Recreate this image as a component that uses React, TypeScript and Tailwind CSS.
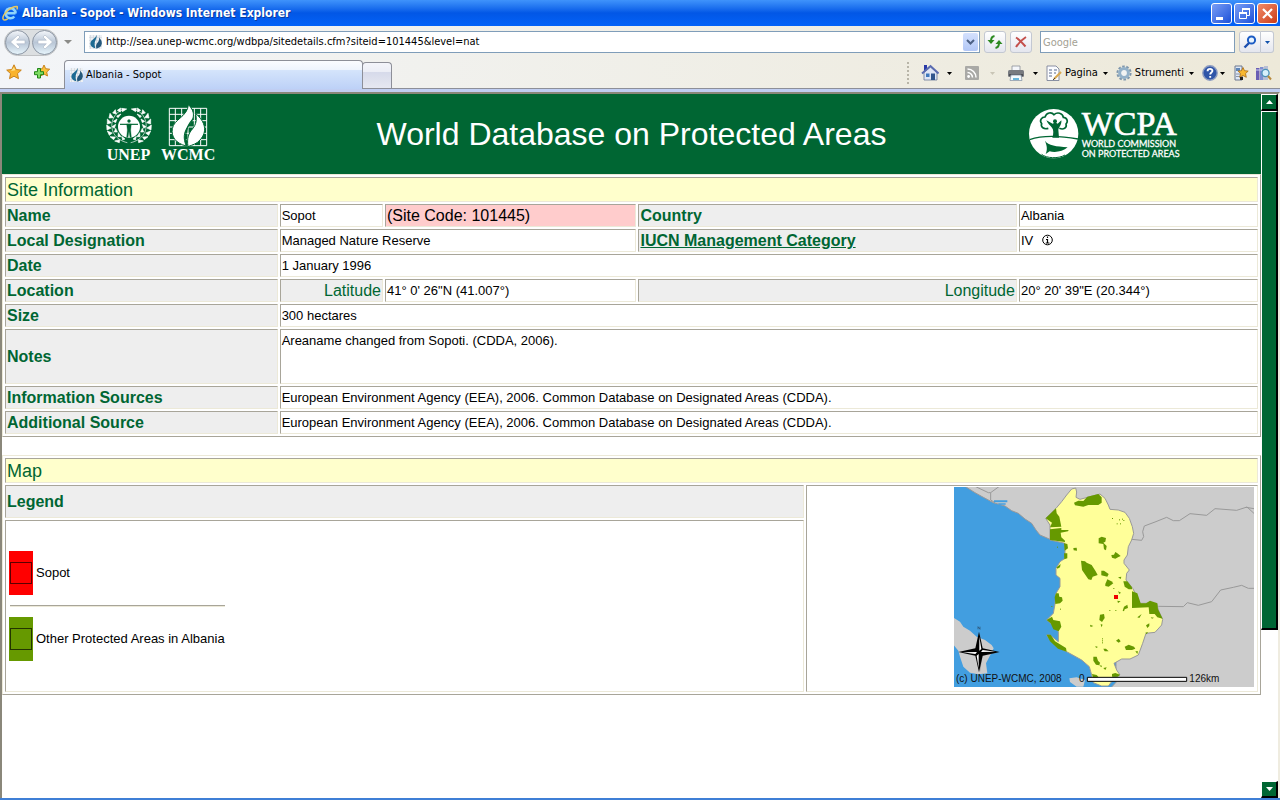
import type { ReactNode } from "react";
import { clsx } from "clsx";

const ui = "font-['DejaVu_Sans_Condensed','Noto_Sans',sans-serif]";

const mapAreas = [
  "372,68 385,62 400,63 412,50 445,42 455,52 455,68 445,75 415,75 400,80 375,76",
  "287,115 318,85 320,100 328,110 334,140 300,142 306,128",
  "300,148 334,144 334,150 356,150 354,154 332,158 334,172 345,182 345,186 300,180",
  "446,175 455,170 468,174 466,185 460,188 470,198 468,211 462,208 460,192 446,190",
  "393,242 405,244 410,248 425,255 436,272 443,285 428,290 424,300 415,298 396,270",
  "454,272 462,272 476,282 472,290 454,286",
  "466,312 472,298 484,304 490,310 476,320 466,318",
  "484,225 492,224 496,216 502,220 512,228 504,232 496,236 486,233",
  "370,204 380,203 381,212 371,211",
  "342,190 352,192 354,205 344,212",
  "342,220 352,220 352,235 343,238",
  "320,262 332,252 330,262 322,266",
  "318,340 326,340 328,350 336,352 338,362 330,370 316,372 314,352",
  "290,420 306,410 310,420 330,424 334,440 326,454 310,448 302,430",
  "290,464 302,464 315,484 348,504 350,515 324,506 300,484",
  "450,404 462,402 464,414 456,426 448,420",
  "420,434 430,438 422,441",
  "452,432 458,434 454,442",
  "430,530 440,530 444,542 450,548 448,556 438,554 430,542",
  "436,498 444,501 438,504",
  "460,506 468,506 476,514 464,514",
  "460,564 470,562 466,570",
  "448,556 456,557 454,562",
  "426,582 440,585 446,592 430,596",
  "520,304 532,304 546,322 546,328 536,328 524,320",
  "546,334 562,340 572,370 588,370 600,362 622,370 624,388 638,416 622,412 614,402 598,402 596,382 546,384",
  "518,392 522,380 532,374 534,384 524,388 522,394",
  "562,412 575,402 568,414",
  "602,412 612,413 606,416",
  "588,436 598,430 598,438 592,444",
  "586,458 594,456 590,463",
  "498,482 506,476 512,484 506,488",
  "524,500 536,494 552,500 556,506 546,510 528,510",
  "556,514 564,514 562,522",
  "486,582 496,579 510,584 504,590 486,590",
  "504,292 514,290 512,297",
  "502,362 512,364 504,369",
  "504,334 513,338 508,342",
];

const specks = [
  "486,114", "507,118", "510,130", "520,120", "500,130", "516,116", "490,324", "478,390", "496,390",
  "456,475", "456,481", "456,487", "321,200", "304,378", "330,386", "322,342",
];

function FlameMark() {
  return (
    <svg viewBox="0 0 16 16" className="size-4 shrink-0" aria-hidden="true">
      <rect x="1" y="1" width="13" height="14" fill="#eef1f4" />
      <path d="M2.500 1v14M5.500 1v14M8.500 1v14M11.500 1v14M1 3.500h13M1 6.500h13M1 9.500h13M1 12.500h13" stroke="#cdd3da" strokeWidth=".6" />
      <path d="M8.500 1C9 4.500 7 6 6.700 9c-.2 2 .2 4 .8 5.500C4 13.500 2 11.500 2.500 9c.5-3.500 5-4 6-8z" fill="#1d6a92" />
      <path d="M11 3.500c2.700 2.500 3.500 5.200 2.400 7.700-.9 1.900-2.600 2.500-4.900 3.600C7.700 12 8 10.500 9.300 9 10.800 7.300 11.500 6 11 3.500z" fill="#24587c" />
    </svg>
  );
}

function Caret({ muted }: { muted?: boolean }) {
  return (
    <svg viewBox="0 0 5 3" className={clsx("h-[3px] w-[5px] shrink-0", muted ? "fill-[#c9c5b6]" : "fill-black")} aria-hidden="true">
      <path d="M0 0h5L2.500 3z" />
    </svg>
  );
}

function TitleBar() {
  const base = "flex size-[21px] items-center justify-center rounded-[3px] border border-white";
  return (
    <header className="flex h-[26px] shrink-0 items-center bg-gradient-to-b from-[#3f93fb] via-[#0257e6] to-[#0362f8] pr-[2px] pl-[2px]">
      <svg viewBox="0 0 16 16" className="size-4" aria-hidden="true">
        <path d="M13.500 8.500a5 5 0 1 0-1.200 3M4 8.300h9.500" fill="none" stroke="#8fd4fb" strokeWidth="2.600" />
        <path d="M1.200 14.500C-.5 10.500 8 1.500 14.800 1.500c1 .3.700 1.700 0 3M1.200 14.500c1 .8 3 .3 4.500-.7" fill="none" stroke="#e8c860" strokeWidth="1.500" />
      </svg>
      <h1 className={clsx(ui, "ml-1 text-[12px] font-bold text-white [text-shadow:1px_1px_0_#0a3a9e]")}>
        Albania - Sopot - Windows Internet Explorer
      </h1>
      <div className="ml-auto flex gap-[2px]">
        <button aria-label="Minimize" className={clsx(base, "bg-gradient-to-br from-[#7a9df5] to-[#1c4fd8]")}>
          <svg viewBox="0 0 19 19" className="size-[19px]"><path d="M4 13h7v3H4z" fill="#fff" /></svg>
        </button>
        <button aria-label="Restore" className={clsx(base, "bg-gradient-to-br from-[#7a9df5] to-[#1c4fd8]")}>
          <svg viewBox="0 0 19 19" className="size-[19px]" fill="none" stroke="#fff">
            <path d="M7.500 8V4.500h7v7H12M4.500 8.500h7v6h-7z" /><path d="M7 5h8M4 9h8" strokeWidth="2" />
          </svg>
        </button>
        <button aria-label="Close" className={clsx(base, "bg-gradient-to-br from-[#f08a68] to-[#cc3a12]")}>
          <svg viewBox="0 0 19 19" className="size-[19px]"><path d="M5 5l9 9M14 5l-9 9" stroke="#fff" strokeWidth="2.200" /></svg>
        </button>
      </div>
    </header>
  );
}

function ArrowButton({ label, flip }: { label: string; flip?: boolean }) {
  return (
    <button aria-label={label} className="flex size-[25px] items-center justify-center rounded-full border border-[#8b95a3] bg-gradient-to-b from-[#f2f5f9] via-[#b9c6d6] to-[#e6f4fb]">
      <svg viewBox="0 0 18 18" className={clsx("size-[18px]", flip && "rotate-180")}>
        <path d="M1.500 9L9 2l2 2-3.300 3.200H16v3.600H7.700L11 14l-2 2z" fill="#fff" stroke="#a9b6c5" strokeWidth=".6" />
      </svg>
    </button>
  );
}

function AddressBar() {
  const btn = "flex h-[22px] items-center justify-center border border-[#c3c8d2] bg-gradient-to-b from-white to-[#e4e6ee]";
  return (
    <div className="flex h-8 items-center pr-[6px] pl-1">
      <div className="flex items-center gap-[2px] rounded-full border border-[#c0c2c4] bg-[#dcdfe1]">
        <ArrowButton label="Back" />
        <ArrowButton label="Forward" flip />
      </div>
      <svg viewBox="0 0 8 4" className="ml-[6px] h-1 w-2 fill-[#8b8b88]" aria-hidden="true"><path d="M0 0h8L4 4z" /></svg>
      <div className="ml-3 flex h-[22px] flex-1 items-center border border-[#7f9db9] bg-white pr-px pl-[3px]">
        <FlameMark />
        <input
          aria-label="Address"
          className={clsx(ui, "ml-[2px] min-w-0 flex-1 text-[11px] text-black outline-none")}
          defaultValue="http://sea.unep-wcmc.org/wdbpa/sitedetails.cfm?siteid=101445&level=nat"
        />
        <button aria-label="Show addresses" className="flex h-[18px] w-[15px] items-center justify-center rounded-[2px] bg-gradient-to-b from-[#d4e1fd] to-[#b2c7f6]">
          <svg viewBox="0 0 9 6" className="h-[6px] w-[9px]"><path d="M1 1l3.500 3.500L8 1" fill="none" stroke="#4d6185" strokeWidth="2" /></svg>
        </button>
      </div>
      <button aria-label="Refresh" className={clsx(btn, "ml-1 w-[22px] rounded-[3px]")}>
        <svg viewBox="0 0 16 16" className="size-4" fill="none" stroke="#2d8a22" strokeWidth="2">
          <path d="M7.500 2C4.500 2.500 4 4 4 7M8.500 14c3-.5 3.500-2 3.500-5" />
          <path d="M.5 6h7L4 10zM8.500 10h7L12 6z" fill="#2d8a22" stroke="none" />
        </svg>
      </button>
      <button aria-label="Stop" className={clsx(btn, "ml-1 w-[22px] rounded-[3px]")}>
        <svg viewBox="0 0 16 16" className="size-4"><path d="M3 3.500c4 2.500 7 6 9.500 9M13 3C9 5.500 5.500 9 3 13" fill="none" stroke="#c4504c" strokeWidth="2" /></svg>
      </button>
      <input
        aria-label="Search"
        placeholder="Google"
        className={clsx(ui, "ml-2 h-[22px] w-[195px] border border-[#7f9db9] bg-white px-[2px] text-[11px] outline-none placeholder:text-[#a3a194]")}
      />
      <button aria-label="Go" className={clsx(btn, "ml-1 w-[22px] rounded-l-[3px]")}>
        <svg viewBox="0 0 16 16" className="size-4"><circle cx="9.500" cy="6" r="3.600" fill="#e8f3fd" stroke="#1c5cc4" strokeWidth="2" /><path d="M7 9l-4.500 4.500" stroke="#1c4fae" strokeWidth="2.400" /></svg>
      </button>
      <button aria-label="Search options" className={clsx(btn, "w-[13px] rounded-r-[3px] border-l-0")}>
        <svg viewBox="0 0 5 3" className="h-[3px] w-[5px] fill-[#1253ab]"><path d="M0 0h5L2.500 3z" /></svg>
      </button>
    </div>
  );
}

function Tool({ label, gap, children }: { label: string; gap?: string; children: ReactNode }) {
  return (
    <button aria-label={label} className={clsx(ui, "flex items-center text-[11px] text-black", gap)}>
      {children}
    </button>
  );
}

const star = "M8 .8l2.200 4.700 5.100.6-3.800 3.500 1 5.100L8 12.200l-4.500 2.500 1-5.100L.7 6.100l5.100-.6z";

function TabRow() {
  return (
    <div className="flex h-[31px] items-end border-b border-[#8d8f98] pr-2 pl-[6px]">
      <button aria-label="Favorites" className="mb-2">
        <svg viewBox="0 0 16 16" className="size-4"><path d={star} fill="#f9b32c" stroke="#c47a12" strokeWidth=".9" /><path d="M8 3l1.300 3.200L5 7z" fill="#fde28c" /></svg>
      </button>
      <button aria-label="Add to favorites" className="mb-2 ml-3">
        <svg viewBox="0 0 16 16" className="size-4">
          <path d="M10 1l1.700 3.700 4 .5-3 2.800.8 4L10 10l-3.500 2 .8-4-3-2.800 4-.5z" fill="#f9c23c" stroke="#c47a12" strokeWidth=".9" />
          <path d="M3.500 4.500h3v3.200h3v3h-3V14h-3v-3.300H.5v-3h3z" fill="#7fdc63" stroke="#1f8418" strokeWidth="1" />
        </svg>
      </button>
      <div role="tab" aria-selected="true" className={clsx(ui, "-mb-px ml-[14px] flex h-[29px] w-[299px] items-center rounded-t-[4px] border border-b-0 border-[#8d8f98] bg-[linear-gradient(#fbfcff_0,#eef4fd_32%,#d4e4fb_34%,#bdd1f7_100%)] pl-1 text-[11px] text-black")}>
        <FlameMark />
        <span className="ml-px">Albania - Sopot</span>
      </div>
      <button aria-label="New tab" className="-ml-px h-[26px] w-[30px] rounded-t-[4px] border border-b-0 border-[#8d8f98] bg-[linear-gradient(#f4f5fa_0,#eceef6_35%,#d6daea_37%,#e6e8f1_100%)]" />

      <div className="ml-auto flex h-[30px] items-center">
        <span className="h-[22px] border-l-2 border-dotted border-[#b8b5a8]" />
        <Tool label="Home" gap="ml-3 gap-2">
          <svg viewBox="0 0 18 18" className="size-[18px]">
            <path d="M3 1h3v6H3z" fill="#2a3aa8" />
            <path d="M3 8.500L9.500 3 16 8.500V16H3z" fill="#e0e6f5" stroke="#6a7898" strokeWidth=".8" />
            <path d="M1 9.500L9.500 2 17.500 9.500" fill="none" stroke="#5a6bb0" strokeWidth="2" />
            <path d="M5 9.500h3.500V13H5z" fill="#3f78bc" /><path d="M10 9.500h4V16h-4z" fill="#31558c" />
          </svg>
          <Caret />
        </Tool>
        <Tool label="Feeds" gap="ml-3 gap-[10px]">
          <svg viewBox="0 0 16 16" className="size-4">
            <rect x="1" y="1" width="14" height="14" rx="1" fill="#a9a9a6" />
            <circle cx="4.600" cy="11.500" r="1.400" fill="#fff" />
            <path d="M3.500 7.500a5 5 0 0 1 5 5M3.500 4a8.500 8.500 0 0 1 8.500 8.500" fill="none" stroke="#fff" strokeWidth="1.500" />
          </svg>
          <Caret muted />
        </Tool>
        <Tool label="Print" gap="ml-3 gap-2">
          <svg viewBox="0 0 18 16" className="h-4 w-[18px]">
            <path d="M5 1h8v5H5z" fill="#f4f6fa" stroke="#8a8f98" strokeWidth=".8" />
            <rect x="1" y="5" width="16" height="7" rx="1.500" fill="#777a80" /><path d="M2 9h14v2H2z" fill="#4d4f55" />
            <path d="M4 10h10l1 5.500H3z" fill="#f5fafd" stroke="#8a98a8" strokeWidth=".8" /><path d="M6 13h6v2H6z" fill="#69b6dc" />
          </svg>
          <Caret />
        </Tool>
        <Tool label="Pagina" gap="ml-2 gap-[3px]">
          <svg viewBox="0 0 16 16" className="size-4">
            <path d="M1 1h9l3 3v11.500H1z" fill="#fbfcff" stroke="#7d8598" strokeWidth=".9" />
            <path d="M3 5h3M3 8h3M3 11h3M8 5h3M8 8h2" stroke="#5a6a8e" strokeWidth="1.200" />
            <path d="M15 7L8 14" stroke="#d8a850" strokeWidth="2.200" /><path d="M9 13l-2 2" stroke="#444" />
          </svg>
          <span className="mr-[2px]">Pagina</span>
          <Caret />
        </Tool>
        <Tool label="Strumenti" gap="ml-2 gap-[3px]">
          <svg viewBox="0 0 16 16" className="size-4">
            <circle cx="8" cy="8" r="6.600" fill="none" stroke="#7f97ad" strokeWidth="2" strokeDasharray="2.600 1.550" />
            <circle cx="8" cy="8" r="4.400" fill="#f1f3f3" stroke="#93b1c9" strokeWidth="3" />
          </svg>
          <span className="mr-[2px]">Strumenti</span>
          <Caret />
        </Tool>
        <Tool label="Help" gap="ml-2 gap-[2px]">
          <svg viewBox="0 0 16 16" className="size-4">
            <circle cx="8" cy="8" r="7.200" fill="#2f55a8" stroke="#8d9cc0" strokeWidth="1.400" />
            <path d="M5.600 6.200C5.600 3 10.600 3.200 10.400 6c-.1 1.500-2.200 1.700-2.200 3.500M8.200 11v1.800" fill="none" stroke="#fff" strokeWidth="1.900" />
          </svg>
          <Caret />
        </Tool>
        <Tool label="Links" gap="ml-2">
          <svg viewBox="0 0 16 16" className="size-4">
            <path d="M2 1h7v14H2z" fill="#dfe8f5" stroke="#6c7890" /><path d="M3 3h4v3H3z" fill="#5e86b8" /><path d="M3 9h4M3 11.500h4" stroke="#8a94a8" />
            <path d="M10 2.500l1.500 3.200 3.700.4-2.700 2.500.8 3.700L10 10.500 6.700 12.300l.8-3.700L5 6.100l3.500-.4z" fill="#f8b830" stroke="#a86a10" strokeWidth=".8" />
            <path d="M7 12h3v3H7z" fill="#222" />
          </svg>
        </Tool>
        <Tool label="Research" gap="ml-[6px]">
          <svg viewBox="0 0 17 16" className="h-4 w-[17px]">
            <path d="M1 3h3.500v12H1z" fill="#6a5fb4" /><path d="M5 2h3.500v13H5z" fill="#7f8fd0" /><path d="M9 1h4v14H9z" fill="#b8bfd4" /><path d="M1 5h12" stroke="#c9ccef" />
            <circle cx="10.500" cy="8" r="3.600" fill="#d7f0fb" stroke="#4a90b8" strokeWidth="1.300" /><path d="M13 11l3 3.500" stroke="#b88a3c" strokeWidth="2" />
          </svg>
        </Tool>
      </div>
    </div>
  );
}

// one laurel branch, mirrored for the other side of the emblem
function Laurel() {
  return (
    <g fill="#fff" stroke="#fff">
      <path d="M112 146C76 138 57 108 69 76 75 60 86 51 102 47" fill="none" strokeWidth="2" />
      <path d="M95 43l15 2-13 8zM82 49l10-7-1 12zM68 57l8-10 3 13zM57 72l3-14 10 13zM52 90l0-15 12 11zM51 108l-1-15 13 9zM58 124l-6-13 15 6zM71 137l-11-9 16 1zM88 146l-14-5 15-4zM80 66l13-6-9 11zM70 82l11-7-4 11zM66 98l11-7-4 12zM73 114l4-11 5 11zM84 128l1-12 8 12zM98 138l-3-11 10 8z" strokeWidth="2" strokeLinejoin="round" />
    </g>
  );
}

function UnepLogo() {
  return (
    <svg viewBox="45 30 336 180" className="h-[60px] w-28" role="img" aria-label="UNEP WCMC">
      <Laurel />
      <g transform="translate(234 0) scale(-1 1)"><Laurel /></g>
      <circle cx="117" cy="98" r="33" fill="#fff" />
      <g fill="#063" stroke="#063">
        <circle cx="117" cy="81" r="4.500" />
        <path d="M90 91h54" strokeWidth="3.500" />
        <path d="M110 90h14l-2 18 2 22h-4l-3-18-3 18h-4l2-22z" strokeWidth="1" />
      </g>
      <path d="M238 43h112v112H238zM256 43v112M275 43v112M294 43v112M313 43v112M332 43v112M238 61h112M238 80h112M238 99h112M238 118h112M238 137h112" fill="none" stroke="#fff" strokeWidth="3" />
      <g fill="#fff" stroke="#063" strokeWidth="3">
        <path d="M295 32c26 26 14 46 0 64-14 18-16 38-6 60-32-8-46-28-42-52 4-28 46-36 48-72z" />
        <path d="M316 58c32 26 36 56 14 80-10 12-22 14-36 20-4-26 2-40 14-54 10-12 14-28 8-46z" />
      </g>
      <path d="M308 76c-20 22-26 48-17 80" fill="none" stroke="#063" strokeWidth="4" />
      <g fill="#fff" fontFamily="'Liberation Serif', serif" fontWeight="bold" fontSize="48">
        <text x="50" y="197">UNEP</text>
        <text x="213" y="197">WCMC</text>
      </g>
    </svg>
  );
}

function WcpaLogo() {
  return (
    <svg viewBox="51 36 456 162" className="h-[54px] w-[152px]" role="img" aria-label="WCPA World Commission on Protected Areas">
      <circle cx="128" cy="116" r="74" fill="#fff" />
      <g fill="none" stroke="#063" strokeWidth="5">
        <path d="M112 100c-14 4-24-4-20-14-8-10 0-20 10-20 4-14 20-16 27-7 10-9 26-5 28 8 10 0 16 12 8 20 4 12-8 18-20 13" />
        <path d="M56 134c40-14 100-10 145-2" strokeWidth="4" />
      </g>
      <path d="M106 76l19 10c5-4 10-4 15 0l11-10c2 12-7 20-9 28l2 24h-20c4-12 4-24-1-30-5-6-13-12-17-22z" fill="#063" />
      <circle cx="132" cy="79" r="6" fill="#063" />
      <path d="M102 137c10 16 34 16 68 20-14 14-40 16-54 12l-12 8c6-14 4-24-2-40z" fill="#063" />
      <path d="M92 178c14 12 50 14 70 2" fill="none" stroke="#063" strokeWidth="3" />
      <g fill="#fff">
        <text x="212" y="119" fontFamily="'Liberation Serif', serif" fontSize="102" stroke="#fff" strokeWidth="2">WCPA</text>
        <g fontFamily="Lato, sans-serif" fontSize="27" stroke="#fff" strokeWidth=".8">
          <text x="212" y="155">WORLD COMMISSION</text>
          <text x="212" y="187">ON PROTECTED AREAS</text>
        </g>
      </g>
    </svg>
  );
}

function AlbaniaMap() {
  return (
    <svg viewBox="12 21 900 600" className="ml-auto block h-[200px] w-[300px]" role="img" aria-label="Map of Albania">
      <path d="M12 21h900v600H12z" fill="#429ee0" />
      <g stroke="#999" strokeWidth="3">
        <path d="M45 19l30 19 25 14 30 16 35 10 20 14 20 8 20 17 20 13 13 20 12 15 28 12 200 0 0 430-15 16 0 20h470V0H45z" fill="#ccc" />
        <path d="M8 412l22 13 10 15 20 12 20 18 25 10 20 15 6 10-10 20-13 25 4 30-27 3-25-5-20-18-5-15-5-15-5-18-17-20zM358 595l22-3 25 8-5 20h-20l-20-14z" fill="#ccc" stroke="none" />
        <path
          d="M350 45l15-18 12-3 3 12-2 16 12 6 30-8 30-8 15 13 10 20 5 13 25 2 20 7 13 18 9 25 4 20-6 20-10 20-3 25-10 15v10l16 20-8 10-2 20 20 25 7 13 15 32h50l5 20 13 28-3 17-20 22-27 3-10 30-13 35-25 12h-25l-23 13 8 20 10 15-20 5-5 15-10 13h-20l-25-10-5-23-7-25-23-20-45-25-30-15-20-20-10-15h10l25 20v-30l-10-15-25-20 20-20 5-28 3-32 12-20v-25l-12-10v-20l12-20 15-10v-45l-45-10v-45l-13-20 31-30 17-20z"
          fill="#ffff99"
        />
        <path
          d="M75 19l40 19h7l26-19M122 38v22l13 8M545 178l30 3 6-11-3-15 5-17 32-12 35-14 20 10h18l32-21 50 5 25-20 65 5 28-9 24 4M890 80l24 22M625 379l75 1 12-12 33 8 40-11 27-35 38-8 25-6 20 9h20"
          fill="none"
        />
      </g>
      <path d="M132 61h40v6h-40zM145 70h22v4h-22z" fill="#429ee0" />
      <g fill="#669900">
        {mapAreas.map((points) => (
          <polygon key={points} points={points} />
        ))}
        {specks.map((p) => (
          <rect key={p} x={p.split(",")[0]} y={p.split(",")[1]} width="3" height="3" />
        ))}
      </g>
      <path d="M492 345h12v12h-12z" fill="#e00" />
      <path d="M90 462l8 46 46 10-46 9-8 50" fill="#777" opacity=".5" />
      <path d="M87 455l11 50 51 11-51 11-11 50-11-50-51-11 51-11z" fill="#000" />
      <path d="M88 470v42l6-5zM136 515l-43 1 5-6zM86 565v-43l-6 5zM38 517l43-1-5 6z" fill="#fff" />
      <path d="M84 448v-8l6 8v-8" fill="none" stroke="#234" strokeWidth="1.500" />
      <path d="M412 592h298v12H412z" fill="#fff" stroke="#000" strokeWidth="3" />
      <g fill="#111" fontFamily="'Liberation Sans', Arial, sans-serif" fontSize="30">
        <text x="18" y="606">(c) UNEP-WCMC, 2008</text>
        <text x="387" y="606">0</text>
        <text x="718" y="606">126km</text>
      </g>
    </svg>
  );
}

const cell = "border border-t-[#a8a599] border-l-[#a8a599] border-r-[#ece9d8] border-b-[#ece9d8] p-px";
const table = "w-full table-fixed border-separate border-spacing-[2px] border border-t-[#ece9d8] border-l-[#ece9d8] border-r-[#a8a599] border-b-[#a8a599]";

function Label({ children }: { children: ReactNode }) {
  return <th scope="row" className={clsx(cell, "bg-[#eee] text-left text-[16px] leading-[19px] font-bold text-[#063]")}>{children}</th>;
}

function Value({ span, className, children }: { span?: number; className?: string; children: ReactNode }) {
  return <td colSpan={span} className={clsx(cell, "text-[13px] leading-[19px]", className)}>{children}</td>;
}

function SubLabel({ children }: { children: ReactNode }) {
  return <th scope="row" className={clsx(cell, "bg-[#eee] text-right text-[16px] leading-[19px] font-normal text-[#063]")}>{children}</th>;
}

function SectionTitle({ span, children }: { span: number; children: ReactNode }) {
  return (
    <th colSpan={span} className={clsx(cell, "bg-[#ffffcc] pt-[2px] pb-0 text-left text-[18px] leading-[21px] font-normal text-[#063]")}>
      {children}
    </th>
  );
}

function SiteTable() {
  return (
    <table className={table}>
      <colgroup>
        <col className="w-[21.9%]" />
        <col className="w-[8.3%]" />
        <col className="w-[20.2%]" />
        <col className="w-[30.4%]" />
        <col />
      </colgroup>
      <tbody>
        <tr>
          <SectionTitle span={5}>Site Information</SectionTitle>
        </tr>
        <tr>
          <Label>Name</Label>
          <Value>Sopot</Value>
          <td className={clsx(cell, "bg-[#ffcccc] text-[16px] leading-[19px]")}>(Site Code: 101445)</td>
          <Label>Country</Label>
          <Value>Albania</Value>
        </tr>
        <tr>
          <Label>Local Designation</Label>
          <Value span={2}>Managed Nature Reserve</Value>
          <Label><a href="#iucn" className="underline">IUCN Management Category</a></Label>
          <Value>
            <span className="flex items-center gap-2">
              IV
              <svg viewBox="0 0 13 13" className="size-[13px]" role="img" aria-label="Info">
                <circle cx="6.500" cy="6" r="4.800" fill="#fff" stroke="#000" />
                <path d="M6.500 2.500v1.600M5 5.500h1.500V9M4.800 9h3.600" fill="none" stroke="#000" strokeWidth="1.200" />
              </svg>
            </span>
          </Value>
        </tr>
        <tr>
          <Label>Date</Label>
          <Value span={4}>1 January 1996</Value>
        </tr>
        <tr>
          <Label>Location</Label>
          <SubLabel>Latitude</SubLabel>
          <Value>41° 0' 26"N (41.007°)</Value>
          <SubLabel>Longitude</SubLabel>
          <Value>20° 20' 39"E (20.344°)</Value>
        </tr>
        <tr>
          <Label>Size</Label>
          <Value span={4}>300 hectares</Value>
        </tr>
        <tr className="h-[55px]">
          <Label>Notes</Label>
          <Value span={4} className="align-top">Areaname changed from Sopoti. (CDDA, 2006).</Value>
        </tr>
        <tr>
          <Label>Information Sources</Label>
          <Value span={4}>European Environment Agency (EEA), 2006. Common Database on Designated Areas (CDDA).</Value>
        </tr>
        <tr>
          <Label>Additional Source</Label>
          <Value span={4}>European Environment Agency (EEA), 2006. Common Database on Designated Areas (CDDA).</Value>
        </tr>
      </tbody>
    </table>
  );
}

function LegendItem({ color, label }: { color: string; label: string }) {
  return (
    <div className="flex items-center gap-[3px]">
      <span className={clsx("flex h-11 w-6 items-center justify-center", color)}>
        <span className="size-[22px] border border-black/65" />
      </span>
      {label}
    </div>
  );
}

function MapTable() {
  return (
    <table className={clsx(table, "mt-[18px]")}>
      <colgroup>
        <col className="w-[63.9%]" />
        <col />
      </colgroup>
      <tbody>
        <tr>
          <SectionTitle span={2}>Map</SectionTitle>
        </tr>
        <tr className="h-[33px]">
          <Label>Legend</Label>
          <td rowSpan={2} className={clsx(cell, "pr-[3px] align-top")}><AlbaniaMap /></td>
        </tr>
        <tr className="h-[172px]">
          <td className={clsx(cell, "pl-[3px] text-[13px]")}>
            <div className="w-fit">
              <LegendItem color="bg-[#f00]" label="Sopot" />
              <hr className="my-[10px] ml-px border-t border-b border-t-[#a8a599] border-b-[#ece9d8]" />
              <LegendItem color="bg-[#690]" label="Other Protected Areas in Albania" />
            </div>
          </td>
        </tr>
      </tbody>
    </table>
  );
}

function ScrollBar() {
  const part = "border border-t-white border-l-white border-r-black border-b-black bg-[#063]";
  return (
    <div className="flex w-[17px] shrink-0 flex-col bg-white">
      <button aria-label="Scroll up" className={clsx(part, "flex h-[17px] shrink-0 items-center justify-center border-r-2 border-b-2")}>
        <svg viewBox="0 0 7 4" className="h-1 w-[7px] fill-white"><path d="M0 4h7L3.500 0z" /></svg>
      </button>
      <div className="flex-1">
        <div className={clsx(part, "h-[77.500%] border-r-2 border-b-2")} />
      </div>
      <button aria-label="Scroll down" className={clsx(part, "flex h-[17px] shrink-0 items-center justify-center border-r-2 border-b-2")}>
        <svg viewBox="0 0 7 4" className="h-1 w-[7px] fill-white"><path d="M0 0h7L3.500 4z" /></svg>
      </button>
    </div>
  );
}

export default function App() {
  return (
    <div className="flex h-screen flex-col overflow-hidden border-b-2 border-[#3f7fd6] bg-white font-['Liberation_Sans',Arial,sans-serif] text-black">
      <TitleBar />
      <div className="shrink-0 bg-gradient-to-r from-[#f3f5f8] to-[#ede9d9]">
        <AddressBar />
        <TabRow />
        <div className="h-[3px] bg-[#c0cef2]" />
      </div>
      <div className="flex min-h-0 flex-1 border-2 border-r-[#efece0] border-b-0 border-t-[#8a877a] border-l-[#8a877a]">
        <main className="min-w-0 flex-1 overflow-hidden">
          <div className="flex h-20 items-center bg-[#063] text-white">
            <div className="flex w-1/4 justify-center pl-1"><UnepLogo /></div>
            <h2 className="flex-1 text-center text-[32px]">World Database on Protected Areas</h2>
            <div className="flex w-1/4 justify-center"><WcpaLogo /></div>
          </div>
          <SiteTable />
          <MapTable />
        </main>
        <ScrollBar />
      </div>
    </div>
  );
}
